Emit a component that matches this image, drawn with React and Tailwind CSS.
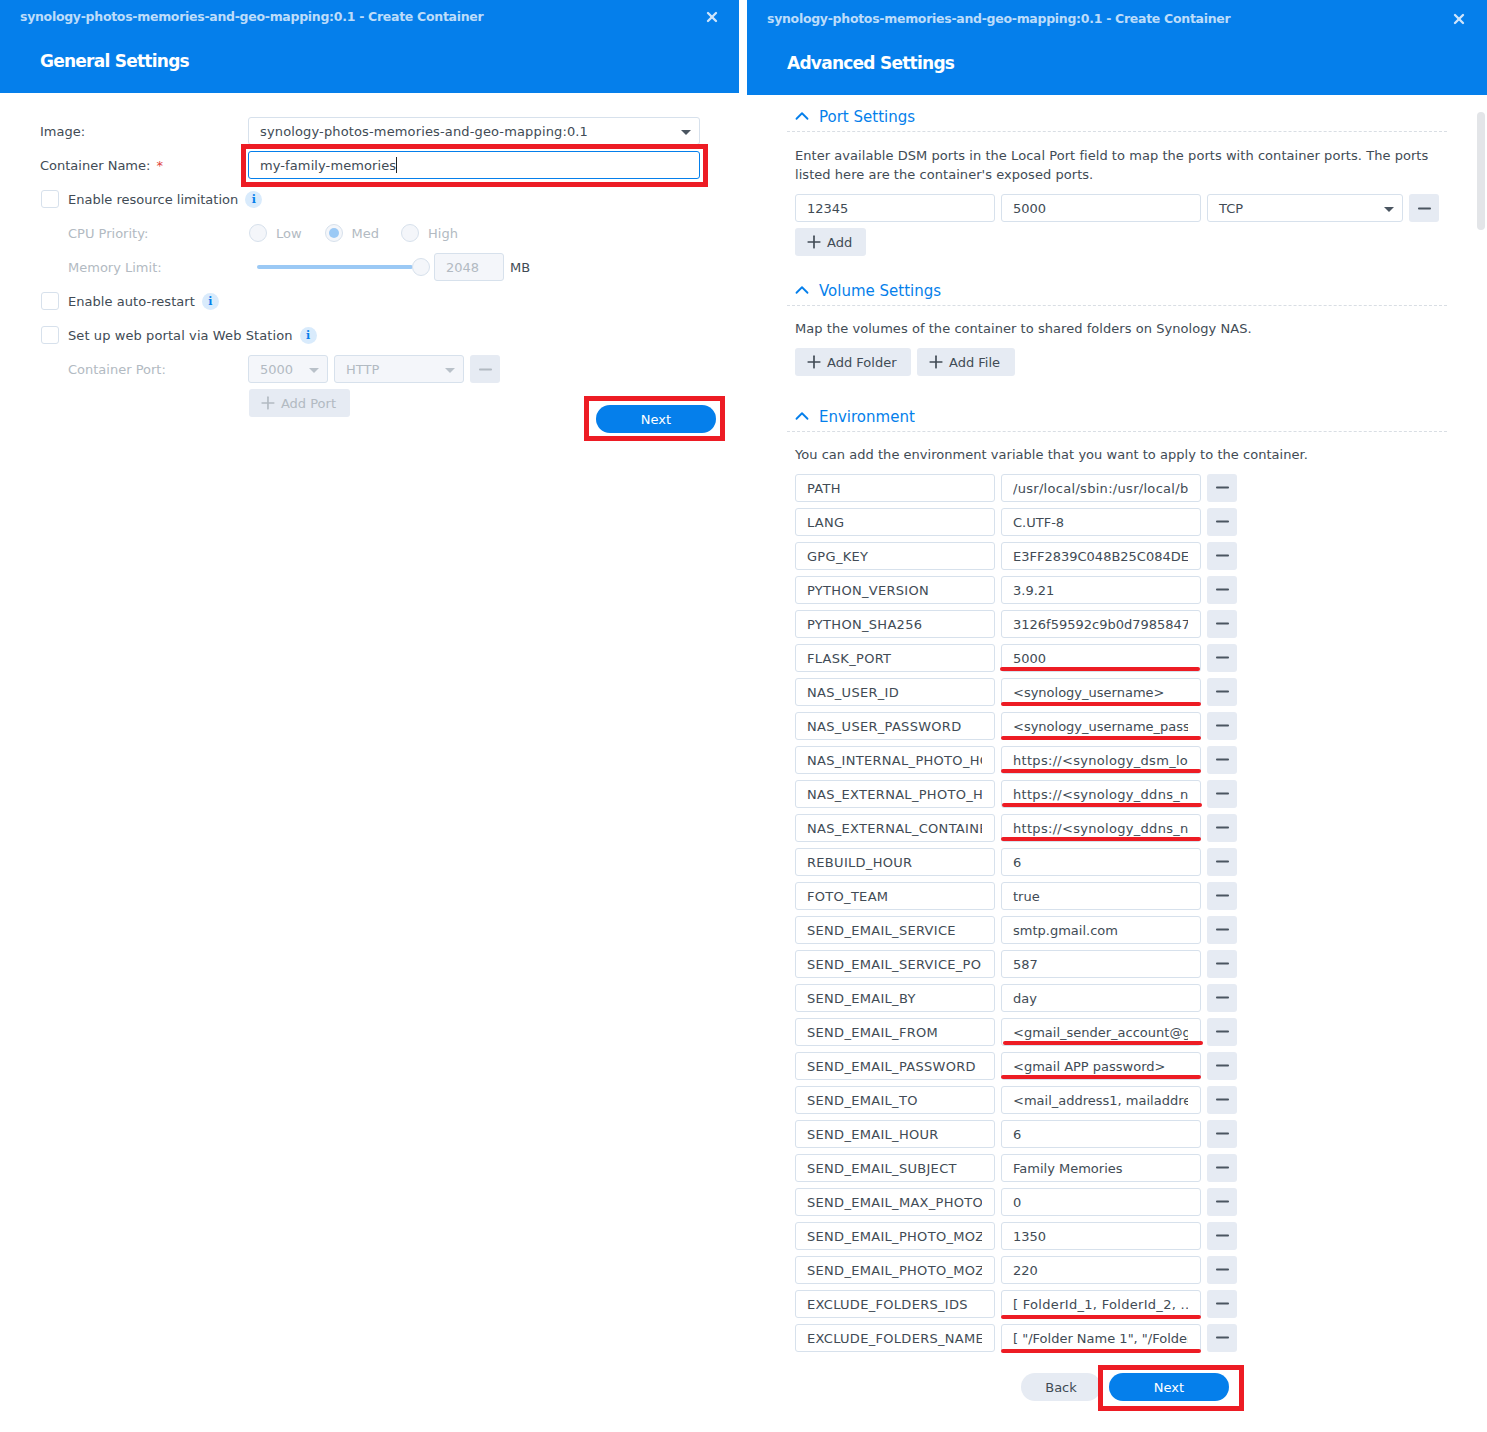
import { X, Plus, Minus, ChevronUp } from 'lucide-react';

const envRows = [
  ['PATH', '/usr/local/sbin:/usr/local/bin', null, true],
  ['LANG', 'C.UTF-8'],
  ['GPG_KEY', 'E3FF2839C048B25C084DEBE9B'],
  ['PYTHON_VERSION', '3.9.21'],
  ['PYTHON_SHA256', '3126f59592c9b0d7985847'],
  ['FLASK_PORT', '5000', 'left-[-1px] w-[200px] bottom-[1px]'],
  ['NAS_USER_ID', '<synology_username>', 'left-0 w-[200px] bottom-0'],
  ['NAS_USER_PASSWORD', '<synology_username_password>', 'left-0 w-[200px] bottom-0'],
  ['NAS_INTERNAL_PHOTO_HOST', 'https://<synology_dsm_local', 'left-0 w-[200px] bottom-[1px]', true],
  ['NAS_EXTERNAL_PHOTO_HOST', 'https://<synology_ddns_name', 'left-[1px] w-[200px] bottom-[1px]', true],
  ['NAS_EXTERNAL_CONTAINER', 'https://<synology_ddns_name', 'left-0 w-[200px] bottom-[1px]', true],
  ['REBUILD_HOUR', '6'],
  ['FOTO_TEAM', 'true'],
  ['SEND_EMAIL_SERVICE', 'smtp.gmail.com'],
  ['SEND_EMAIL_SERVICE_PORT', '587'],
  ['SEND_EMAIL_BY', 'day'],
  ['SEND_EMAIL_FROM', '<gmail_sender_account@gmail.com>', 'left-[2px] w-[200px] bottom-[1px]'],
  ['SEND_EMAIL_PASSWORD', '<gmail APP password>', 'left-0 w-[200px] bottom-[1px]'],
  ['SEND_EMAIL_TO', '<mail_address1, mailaddress2>'],
  ['SEND_EMAIL_HOUR', '6'],
  ['SEND_EMAIL_SUBJECT', 'Family Memories'],
  ['SEND_EMAIL_MAX_PHOTOS', '0'],
  ['SEND_EMAIL_PHOTO_MOZA', '1350'],
  ['SEND_EMAIL_PHOTO_MOZA', '220'],
  ['EXCLUDE_FOLDERS_IDS', '[ FolderId_1, FolderId_2, ... ]', 'left-0 w-[200px] bottom-[-1px]', true],
  ['EXCLUDE_FOLDERS_NAME', '[ "/Folder Name 1", "/Folder Name 2" ]', 'left-0 w-[200px] bottom-[-1px]'],
];

function Caret({ disabled }) {
  return <span className={`ml-auto mr-[-4px] w-0 h-0 border-x-[5px] border-x-transparent border-t-[5px] ${disabled ? 'border-t-[#b9c1c9]' : 'border-t-[#4a5560]'}`} />;
}

function Field({ children, className = '', disabled, focused }) {
  return (
    <div className={`h-7 flex items-center pl-[11px] pr-3 pt-[2px] rounded-[3px] border whitespace-nowrap overflow-hidden ${focused ? 'border-[#057feb]' : 'border-[#d7e1ec]'} ${disabled ? 'bg-[#f4f6fa] text-[#b2bac2]' : 'bg-white'} ${className}`}>
      {children}
    </div>
  );
}

function ClipField({ text, className = '', textClass = '' }) {
  return (
    <Field className={className}>
      <span className={`block w-full overflow-hidden ${textClass}`}>{text}</span>
    </Field>
  );
}

function MinusBtn({ disabled }) {
  return (
    <div className="w-[30px] h-7 shrink-0 rounded-[3px] bg-[#e6ebf3] flex items-center justify-center">
      <Minus size={19} strokeWidth={2.5} className={disabled ? 'text-[#b2bac2]' : 'text-[#4a5560]'} />
    </div>
  );
}

function AddBtn({ label, disabled, className = '' }) {
  return (
    <div className={`h-7 pl-[9px] pr-[14px] rounded-[3px] bg-[#e6ebf3] inline-flex items-center gap-[3px] whitespace-nowrap ${disabled ? 'text-[#b2bac2]' : ''} ${className}`}>
      <Plus size={20} strokeWidth={2} />
      <span className="pt-[2px]">{label}</span>
    </div>
  );
}

function Info() {
  return (
    <span className="w-[17px] h-[17px] rounded-full bg-[#d9ebfc] flex items-center justify-center text-[#057feb] font-['DejaVu_Serif',serif] text-[11px] font-bold leading-none">i</span>
  );
}

function Check({ label, labelClass = '' }) {
  return (
    <div className="h-7 flex items-center mb-[6px]">
      <span className="w-[18px] h-[18px] ml-[1px] rounded-[3px] border border-[#d7e1ec] bg-white" />
      <span className={`ml-[9px] mr-[7px] pt-[2px] ${labelClass}`}>{label}</span>
      <Info />
    </div>
  );
}

function Radio({ label, checked, className = '' }) {
  return (
    <div className={`flex items-center ${className}`}>
      <span className="w-[18px] h-[18px] rounded-full border border-[#d7e1ec] bg-[#f4f6fa] flex items-center justify-center">
        {checked && <span className="w-[10px] h-[10px] rounded-full bg-[#9bc9f5]" />}
      </span>
      <span className="ml-[9px] pt-[2px]">{label}</span>
    </div>
  );
}

function Header({ title, height, titleClass, subClass, closeClass }) {
  return (
    <div className={`relative bg-[#057feb] ${height}`}>
      <div className={`pl-5 font-bold text-[12.5px] tracking-[-0.29px] leading-4 text-[#bcdcfa] ${titleClass}`}>
        synology-photos-memories-and-geo-mapping:0.1 - Create Container
      </div>
      <div className={`pl-10 font-bold text-[17px] tracking-[-0.75px] leading-6 text-white ${subClass}`}>{title}</div>
      <X size={16} strokeWidth={3.5} className={`absolute text-[#cfe5fb] ${closeClass}`} />
    </div>
  );
}

function Section({ title, className = '' }) {
  return (
    <div className={`h-[26px] pl-1 flex items-start gap-[6px] border-b border-dashed border-[#d9dee4] text-[#057feb] text-[15px] leading-5 ${className}`}>
      <ChevronUp size={22} strokeWidth={2} className="mt-[-2px]" />
      {title}
    </div>
  );
}

function Box({ className }) {
  return <div className={`absolute border-[5px] border-[#ed1c24] pointer-events-none ${className}`} />;
}

function GeneralPanel() {
  return (
    <div className="w-[739px] shrink-0">
      <Header title="General Settings" height="h-[93px]" titleClass="pt-[9px]" subClass="pt-[24px]" closeClass="right-[19px] top-[9px]" />
      <div className="pl-10 pr-[39px] pt-6">
        <div className="flex items-center mb-[6px]">
          <span className="w-[208px] pt-[2px]">Image:</span>
          <Field className="w-[452px] tracking-[0.14px]">synology-photos-memories-and-geo-mapping:0.1<Caret /></Field>
        </div>
        <div className="relative flex items-center mb-[6px]">
          <span className="w-[208px] pt-[2px]">Container Name: <span className="text-[#e0433b] ml-[2px]">*</span></span>
          <Field focused className="w-[452px] tracking-[0.1px]">
            my-family-memories<span className="w-px h-4 bg-[#222] mt-[-2px]" />
          </Field>
          <Box className="left-[201px] top-[-7px] w-[467px] h-[43px]" />
        </div>
        <Check label="Enable resource limitation" />
        <div className="h-7 flex items-center mb-[6px] text-[#b2bac2]">
          <span className="w-[209px] pl-7 pt-[2px]">CPU Priority:</span>
          <Radio label="Low" />
          <Radio label="Med" checked className="ml-[23px]" />
          <Radio label="High" className="ml-[22px]" />
        </div>
        <div className="h-7 flex items-center mb-[6px] text-[#b2bac2]">
          <span className="w-[217px] pl-7 pt-[2px]">Memory Limit:</span>
          <div className="w-[156px] h-1 rounded-full bg-[#9bc9f5]" />
          <span className="w-[18px] h-[18px] ml-[-1px] rounded-full border border-[#d7e1ec] bg-[#f4f6fa] shrink-0" />
          <Field disabled className="w-[70px] ml-[4px]">2048</Field>
          <span className="ml-[6px] pt-[2px] text-[#414b55]">MB</span>
        </div>
        <Check label="Enable auto-restart" labelClass="tracking-[0.05px]" />
        <Check label="Set up web portal via Web Station" labelClass="tracking-[0.09px]" />
        <div className="flex items-center gap-[6px] text-[#b2bac2] mb-[6px]">
          <span className="w-[202px] pl-7 pt-[2px]">Container Port:</span>
          <Field disabled className="w-[80px]">5000<Caret disabled /></Field>
          <Field disabled className="w-[130px]">HTTP<Caret disabled /></Field>
          <MinusBtn disabled />
        </div>
        <div className="relative pl-[209px] h-7">
          <AddBtn label="Add Port" disabled className="w-[101px]" />
          <div className="absolute left-[556px] top-[16px] w-[120px] h-7 pt-[2px] rounded-full bg-[#057feb] text-white flex items-center justify-center">Next</div>
          <Box className="left-[544px] top-[7px] w-[141px] h-[45px]" />
        </div>
      </div>
    </div>
  );
}

function AdvancedPanel() {
  return (
    <div className="relative flex-1">
      <Header title="Advanced Settings" height="h-[95px]" titleClass="pt-[11px]" subClass="pt-[24px]" closeClass="right-5 top-[11px]" />
      <div className="absolute right-[2px] top-[112px] w-[8px] h-[118px] rounded-full bg-[#e3e5e8]" />
      <div className="pl-10 pr-10 pt-[11px]">
        <Section title="Port Settings" className="pt-[1px]" />
        <div className="px-2 pt-[14px]">
          <p className="leading-[19px] w-[640px] tracking-[0.05px]">Enter available DSM ports in the Local Port field to map the ports with container ports. The ports listed here are the container's exposed ports.</p>
          <div className="flex gap-[6px] mt-[10px]">
            <Field className="w-[200px]">12345</Field>
            <Field className="w-[200px]">5000</Field>
            <Field className="w-[196px]">TCP<Caret /></Field>
            <MinusBtn />
          </div>
          <AddBtn label="Add" className="mt-[6px]" />
        </div>

        <Section title="Volume Settings" className="mt-[22px] pt-[1px]" />
        <div className="px-2 pt-[13px]">
          <p className="leading-[19px] tracking-[0.05px]">Map the volumes of the container to shared folders on Synology NAS.</p>
          <div className="flex gap-[6px] mt-[10px]">
            <AddBtn label="Add Folder" className="w-[116px]" />
            <AddBtn label="Add File" className="w-[98px]" />
          </div>
        </div>

        <Section title="Environment" className="mt-[30px] pt-[1px]" />
        <div className="px-2 pt-[13px]">
          <p className="leading-[19px] tracking-[0.03px]">You can add the environment variable that you want to apply to the container.</p>
          <div className="flex flex-col gap-[6px] mt-[10px]">
            {envRows.map(([name, value, mark, wide], i) => (
              <div key={i} className="flex gap-[6px]">
                <ClipField text={name} className="w-[200px]" textClass="tracking-[0.3px]" />
                <div className="relative w-[200px]">
                  <ClipField text={value} textClass={wide ? 'tracking-[0.3px]' : ''} />
                  {mark && <div className={`absolute h-1 rounded-full bg-[#ed1c24] ${mark}`} />}
                </div>
                <MinusBtn />
              </div>
            ))}
          </div>
          <div className="relative flex mt-[21px] pl-[226px] h-7">
            <div className="w-20 h-7 pt-[2px] rounded-full bg-[#e6ebf3] flex items-center justify-center">Back</div>
            <div className="w-[120px] h-7 pt-[2px] ml-2 rounded-full bg-[#057feb] text-white flex items-center justify-center">Next</div>
            <Box className="left-[303px] top-[-8px] w-[146px] h-[46px]" />
          </div>
        </div>
      </div>
    </div>
  );
}

export default function App() {
  return (
    <div className="w-[1487px] h-[1432px] overflow-hidden bg-white flex gap-2 font-['DejaVu_Sans',sans-serif] text-[13px] text-[#414b55]">
      <GeneralPanel />
      <AdvancedPanel />
    </div>
  );
}
